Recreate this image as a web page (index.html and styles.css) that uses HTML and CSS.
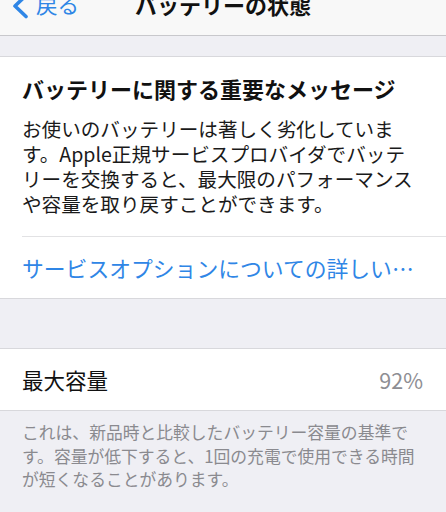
FILE: index.html
```html
<!DOCTYPE html>
<html lang="ja">
<head>
<meta charset="utf-8">
<link rel="stylesheet" href="styles.css">
</head>
<body>
<header class="nav">
  <a class="back">
    <svg class="chev" viewBox="0 0 17 26" width="17" height="26"><path d="M14 2.5 L3 13 L14 23.5" fill="none" stroke="#2f86e6" stroke-width="3.6" stroke-linecap="round" stroke-linejoin="round"/></svg>
    <span>戻る</span>
  </a>
  <h1 class="nav-title">バッテリーの状態</h1>
</header>
<div class="gap-top"></div>
<section class="card">
  <div class="msg">
    <h2 class="msg-title">バッテリーに関する重要なメッセージ</h2>
    <p class="msg-body">お使いのバッテリーは著しく劣化していま<br>す。Apple正規サービスプロバイダでバッテ<br>リーを交換すると、最大限のパフォーマンス<br>や容量を取り戻すことができます。</p>
  </div>
  <div class="link-row"><span class="link">サービスオプションについての詳しい…</span></div>
</section>
<div class="gap-mid"></div>
<section class="row">
  <span class="row-label">最大容量</span>
  <span class="row-value">92%</span>
</section>
<p class="footer">これは、新品時と比較したバッテリー容量の基準で<br>す。容量が低下すると、1回の充電で使用できる時間<br>が短くなることがあります。</p>
</body>
</html>
```
FILE: styles.css
```css
html, body {
  margin: 0;
  padding: 0;
}
body {
  background: #efeff4;
  font-family: "Noto Sans CJK JP", "Noto Sans", sans-serif;
  color: #111;
  width: 446px;
  height: 512px;
  overflow: hidden;
}
.nav {
  position: relative;
  height: 35px;
  background: #f8f8f8;
  border-bottom: 1px solid #c8c8cc;
  display: flex;
  align-items: flex-start;
  justify-content: center;
}
.nav-title {
  margin: -11px 0 0;
  font-size: 22px;
  line-height: 30px;
  font-weight: 700;
  color: #111;
}
.back {
  position: absolute;
  left: 12px;
  top: -11px;
  display: flex;
  align-items: center;
  gap: 7px;
  color: #2f86e6;
  font-size: 21.5px;
  line-height: 30px;
}
.chev {
  display: block;
  margin-top: 4px;
}
.gap-top {
  height: 20px;
}
.card {
  background: #fff;
  border-top: 1px solid #d8d8dc;
  border-bottom: 1px solid #d8d8dc;
}
.msg {
  margin-left: 22px;
  padding: 16px 10px 20px 0;
  border-bottom: 1px solid #e2e2e4;
}
.msg-title {
  margin: 0;
  font-size: 22px;
  line-height: 30px;
  font-weight: 700;
  color: #111;
}
.msg-body {
  margin: 13px 0 0;
  font-size: 19.6px;
  line-height: 25px;
  color: #1a1a1a;
  white-space: nowrap;
}
.link-row {
  height: 61px;
  padding-left: 22px;
  display: flex;
  align-items: center;
}
.link {
  font-size: 21.8px;
  color: #2f86e6;
  line-height: 30px;
  white-space: nowrap;
}
.gap-mid {
  height: 49px;
}
.row {
  background: #fff;
  border-top: 1px solid #d8d8dc;
  border-bottom: 1px solid #d8d8dc;
  height: 61px;
  padding: 0 23px 0 22px;
  display: flex;
  align-items: center;
  justify-content: space-between;
}
.row-label {
  font-size: 21.5px;
  color: #111;
}
.row-value {
  font-size: 21.5px;
  color: #8e8e93;
}
.footer {
  margin: 0;
  padding: 10px 0 0 22px;
  font-size: 16.8px;
  line-height: 23.5px;
  color: #8a8a8f;
  white-space: nowrap;
}
```
